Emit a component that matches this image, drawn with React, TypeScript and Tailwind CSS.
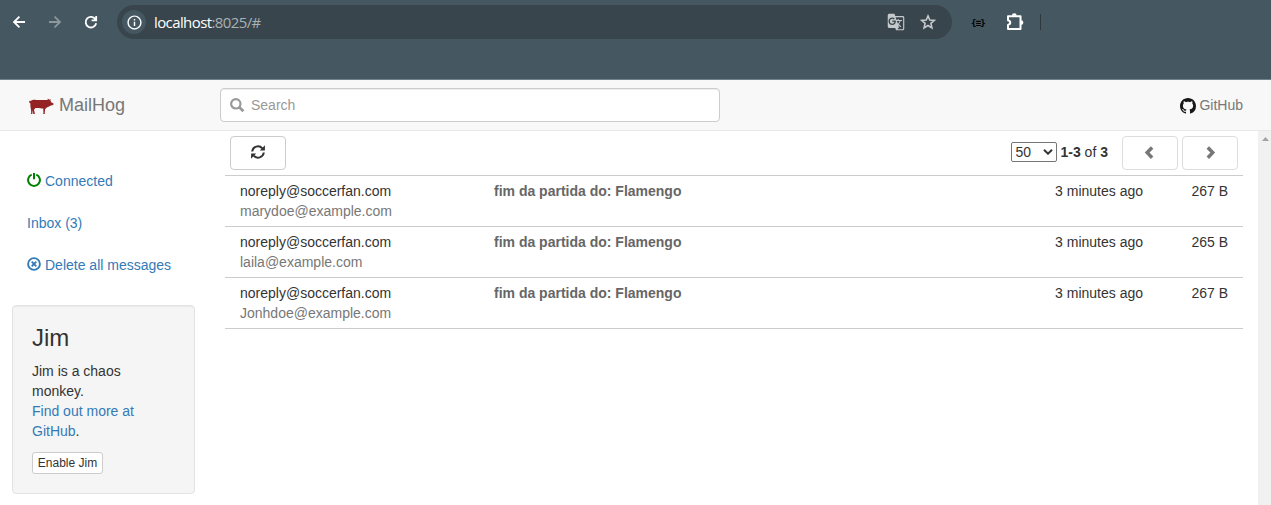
import React from "react";
import { MdInfoOutline, MdGTranslate } from "react-icons/md";

const messages = [
  { from: "noreply@soccerfan.com", to: "marydoe@example.com", size: "267 B" },
  { from: "noreply@soccerfan.com", to: "laila@example.com", size: "265 B" },
  { from: "noreply@soccerfan.com", to: "Jonhdoe@example.com", size: "267 B" },
];

function BrowserBar() {
  return (
    <div className="h-20 shrink-0 border-b border-[#71828a] bg-[#455760] pt-[5px]">
      <div className="flex h-[34px] items-center">
        <div className="flex w-[117px] items-center gap-[18px] pl-[10px] text-white">
          <svg width="18" height="18" viewBox="0 0 18 18" fill="none" stroke="currentColor" strokeWidth="1.800">
            <path d="M15 9H4.300M9.400 3.600L4 9L9.400 14.400" />
          </svg>
          <svg width="18" height="18" viewBox="0 0 18 18" fill="none" stroke="#8b979d" strokeWidth="1.800">
            <path d="M3 9H13.700M8.600 3.600L14 9L8.600 14.400" />
          </svg>
          <svg width="18" height="18" viewBox="0 0 18 18" fill="none" stroke="currentColor" strokeWidth="1.800">
            <path d="M14.200 10.300A5.300 5.300 0 1 1 13.600 6.500L14 7.300M14.200 3V7.400H9.600" />
          </svg>
        </div>
        <div className="flex h-[34px] w-[835px] items-center rounded-full bg-[#38454c] pl-[5px] pr-[14px]">
          <div className="flex size-6 items-center justify-center rounded-full bg-[#455760] text-white">
            <MdInfoOutline size={17} />
          </div>
          <div className="ml-2 font-['Open_Sans',sans-serif] text-[15px] leading-5 tracking-[-0.6px] text-white">
            localhost<span className="text-[#a9b1b5]">:8025/#</span>
          </div>
          <div className="ml-auto flex items-center gap-[13px] text-[#c5c9cb]">
            <MdGTranslate size={18} />
            <svg width="20" height="20" viewBox="0 0 20 20" fill="none" stroke="currentColor" strokeWidth="1.600">
              <path d="M10 3.900L11.800 8L16.300 8.400L12.900 11.400L13.900 15.900L10 13.500L6.100 15.900L7.100 11.400L3.700 8.400L8.200 8Z" />
            </svg>
          </div>
        </div>
        <div className="ml-[18px] mt-[1px] w-[16px] text-center font-['DejaVu_Sans_Mono',monospace] text-[9px] font-bold leading-[10px] tracking-[-0.8px] text-black">{"{≡}"}</div>
        <svg className="ml-[19px]" width="20" height="20" viewBox="0 0 20 20" fill="none" stroke="white" strokeWidth="2" strokeLinejoin="round">
          <path d="M3 4.200H15.500V16.900H3V12.900C6 12.200 6 8.900 3 8.200Z" />
          <path d="M6.900 3.700A2.400 2.400 0 0 1 11.700 3.700ZM16 8.200A2.400 2.400 0 0 1 16 13Z" fill="white" stroke="none" />
        </svg>
        <div className="ml-[15px] h-4 w-px bg-[#2e393e]" />
      </div>
    </div>
  );
}

function Pig() {
  return (
    <svg className="mt-[2px]" width="25" height="17" viewBox="0 0 25 17" fill="#952225">
      <path d="M.3 3C.5 2.400 1.200 2.600 1.500 3.100C3 1.900 5 1.700 7 1.900C10 2.200 13 1.900 15.500 1.900C17 1.900 18 2 18.600 2.100L18.800.6L20.300 1.700L21.400 1L21.600 3.100L22.500 4.400L24.600 5.600L24.200 7L21.800 7.500C20 8.500 19 9.300 17.400 9.800L16.100 11.300L15.700 16H13.900L14.500 15L14.200 10.600C12 10.200 9 9.700 6.500 10L5 11.700L5.900 16H4.300L3.700 12L3.300 16H1.700L2.200 15L2 11.500L1.500 9.300L1.300 5.300C.3 5 .1 4 .3 3Z" />
    </svg>
  );
}

function Chevron({ right = false }: { right?: boolean }) {
  return (
    <svg width="14" height="14" viewBox="0 0 14 14" fill="none" stroke="#777" strokeWidth="3.500">
      <path d={right ? "M4.800 1.500L9.700 6.600L4.800 11.700" : "M9.100 1.500L4.200 6.600L9.100 11.700"} />
    </svg>
  );
}

function Navbar() {
  return (
    <header className="flex h-[51px] shrink-0 items-center border-b border-[#e7e7e7] bg-[#f8f8f8] text-[#777]">
      <a className="flex w-[220px] items-center gap-[5px] pl-[29px] text-[18px] leading-5">
        <Pig />
        <span>MailHog</span>
      </a>
      <div className="flex h-[34px] w-[500px] items-center gap-[6px] rounded border border-[#ccc] bg-white pl-[9px] text-[14px] text-[#999] shadow-[inset_0_1px_1px_rgba(0,0,0,0.075)]">
        <svg width="15" height="14" viewBox="0 0 15 14" fill="none" stroke="#999">
          <circle cx="5.800" cy="5.800" r="4.700" strokeWidth="2.200" />
          <path d="M9.100 9.100L13.400 13.200" strokeWidth="2.800" />
        </svg>
        <span>Search</span>
      </div>
      <a className="ml-auto mr-7 flex items-center gap-[3px]">
        <svg className="mt-[2px]" width="16" height="16" viewBox="0 0 16 16" fill="#191717">
          <path d="M8 0C3.580 0 0 3.580 0 8c0 3.540 2.290 6.530 5.470 7.590.4.070.55-.17.55-.38 0-.19-.01-.82-.01-1.490-2.010.37-2.530-.49-2.690-.94-.09-.23-.48-.94-.82-1.130-.28-.15-.68-.52-.01-.53.63-.01 1.080.58 1.230.82.72 1.210 1.870.87 2.330.66.07-.52.28-.87.51-1.070-1.780-.2-3.640-.89-3.640-3.950 0-.87.31-1.590.82-2.150-.08-.2-.36-1.020.08-2.120 0 0 .67-.21 2.200.82.64-.18 1.320-.27 2-.27s1.360.09 2 .27c1.530-1.040 2.200-.82 2.200-.82.44 1.100.16 1.920.08 2.120.51.56.82 1.270.82 2.150 0 3.070-1.870 3.750-3.650 3.950.29.25.54.73.54 1.480 0 1.070-.01 1.930-.01 2.200 0 .21.15.46.55.38A8.010 8.010 0 0 0 16 8c0-4.420-3.580-8-8-8z" />
        </svg>
        <span>GitHub</span>
      </a>
    </header>
  );
}

function Sidebar() {
  return (
    <aside className="flex w-[225px] shrink-0 flex-col pl-3 pt-[30px]">
      <nav className="flex flex-col gap-[2px] text-[#337ab7]">
        <a className="flex h-10 items-center gap-1 pl-[15px]">
          <svg className="-mt-[2px]" width="14" height="14" viewBox="0 0 14 14" fill="none" stroke="#008000" strokeWidth="2">
            <path d="M4.700 1.600A5.900 5.900 0 1 0 9.300 1.600M7 0V6.200" />
          </svg>
          <span>Connected</span>
        </a>
        <a className="flex h-10 items-center pl-[15px]">Inbox (3)</a>
        <a className="flex h-10 items-center gap-1 pl-[15px]">
          <svg className="-mt-[2px]" width="14" height="14" viewBox="0 0 14 14" fill="none" stroke="#337ab7" strokeWidth="1.900">
            <circle cx="7" cy="7" r="5.900" />
            <path d="M4.700 4.700L9.300 9.300M9.300 4.700L4.700 9.300" />
          </svg>
          <span>Delete all messages</span>
        </a>
      </nav>
      <section className="mt-5 h-[189px] w-[183px] rounded border border-[#e3e3e3] bg-[#f5f5f5] p-[19px] shadow-[inset_0_1px_1px_rgba(0,0,0,0.05)]">
        <h3 className="mb-[10px] text-[24px] leading-[26.4px]">Jim</h3>
        <p className="mb-[11px]">
          Jim is a chaos monkey.
          <br />
          <a className="text-[#337ab7]">Find out more at GitHub</a>.
        </p>
        <button className="block h-[22px] w-[71px] rounded-[3px] border border-[#ccc] bg-white text-[12px] leading-[18px]">Enable Jim</button>
      </section>
    </aside>
  );
}

function Toolbar() {
  return (
    <div className="flex h-11 items-center px-[5px]">
      <button className="flex h-[34px] w-14 items-center justify-center rounded border border-[#ccc]">
        <svg className="-mt-[2px]" width="14" height="14" viewBox="0 0 14 14" fill="none" stroke="#333" strokeWidth="2">
          <path d="M1.200 6.500A5.800 5.700 0 0 1 11.300 3.300M12.800 7.500A5.800 5.700 0 0 1 2.700 10.700" />
          <path d="M13.900.3V5.400H8.800ZM.1 13.700V8.600H5.200Z" fill="#333" stroke="none" />
        </svg>
      </button>
      <div className="-mt-[2px] ml-auto flex items-center">
        <div className="flex h-5 w-[46px] items-center justify-between rounded-[2px] border border-[#767676] bg-white pl-1 pr-[3px]">
          <span>50</span>
          <svg width="10" height="6" viewBox="0 0 10 6" fill="none" stroke="#333" strokeWidth="2">
            <path d="M1 .8L5 4.700L9 .8" />
          </svg>
        </div>
        <div className="ml-1"><b>1-3</b> of <b>3</b></div>
      </div>
      <div className="ml-[14px] flex gap-1">
        <button className="flex h-[34px] w-14 items-center justify-center rounded border border-[#ddd]"><Chevron /></button>
        <button className="flex h-[34px] w-14 items-center justify-center rounded border border-[#ddd]"><Chevron right /></button>
      </div>
    </div>
  );
}

export default function App() {
  return (
    <div className="flex h-[505px] w-[1271px] flex-col overflow-hidden bg-white font-['Liberation_Sans',Arial,sans-serif] text-[14px] leading-5 text-[#333]">
      <BrowserBar />
      <Navbar />
      <div className="flex min-h-0 flex-1">
        <Sidebar />
        <main className="mr-[15px] flex-1">
          <Toolbar />
          <div className="border-b border-[#ccc]">
            {messages.map((m) => (
              <div key={m.to} className="flex h-[51px] border-t border-[#ccc] px-[15px] pt-[5px]">
                <div className="w-[254px]">
                  <div>{m.from}</div>
                  <div className="text-[#777]">{m.to}</div>
                </div>
                <div className="flex-1 font-bold text-[#666]">fim da partida do: Flamengo</div>
                <div>3 minutes ago</div>
                <div className="w-[85px] text-right">{m.size}</div>
              </div>
            ))}
          </div>
        </main>
        <div className="flex w-[13px] justify-center bg-[#f1f1f1] pl-[2px] pt-[6px]">
          <svg width="7" height="4" viewBox="0 0 7 4" fill="#a3a3a3"><path d="M0 4L3.500 0L7 4Z" /></svg>
        </div>
      </div>
    </div>
  );
}
